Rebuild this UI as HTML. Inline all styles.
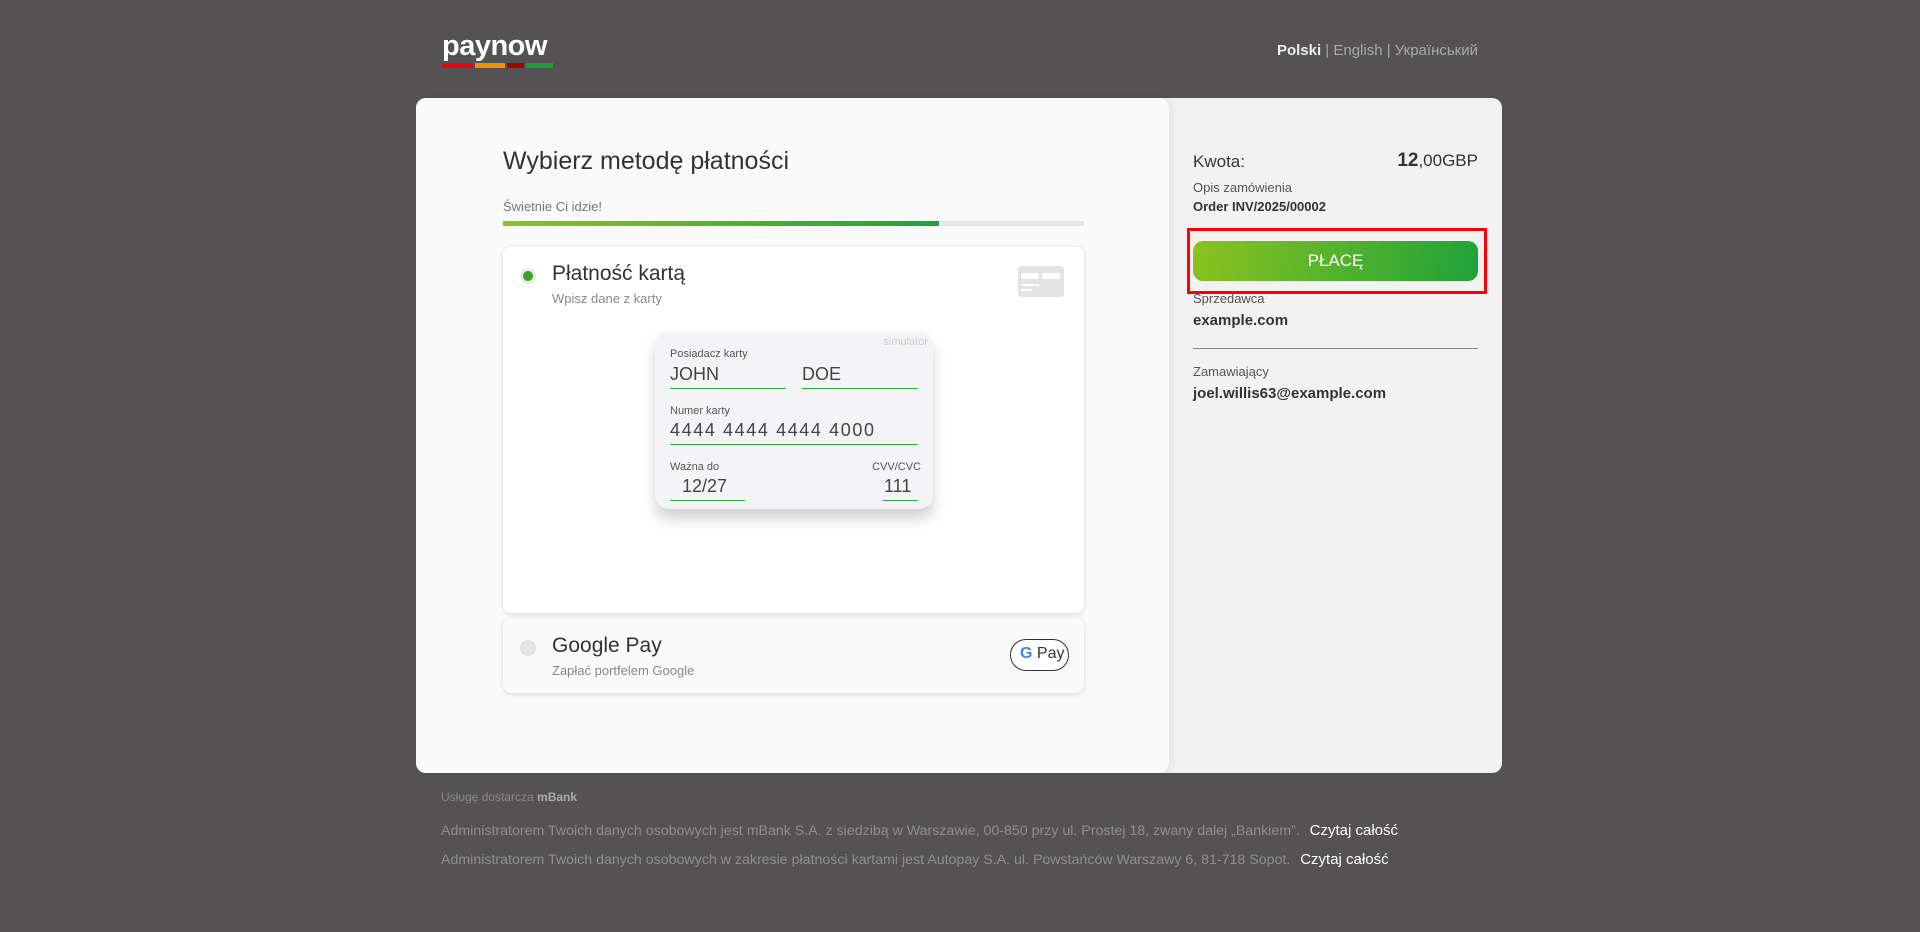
<!DOCTYPE html>
<html><head><meta charset="utf-8"><style>
*{margin:0;padding:0;box-sizing:border-box}
body{width:1920px;height:932px;background:#545253;font-family:"Liberation Sans",sans-serif;position:relative;overflow:hidden;color:#333}
.a{position:absolute;white-space:nowrap}
</style></head><body>
<div class="a" style="left:442px;top:30px;font-size:29px;font-weight:bold;color:#fff;letter-spacing:-0.5px">paynow</div>
<div class="a" style="left:442px;top:63px;width:31px;height:5px;background:#e30613"></div>
<div class="a" style="left:475px;top:63px;width:30px;height:5px;background:#f39200"></div>
<div class="a" style="left:507px;top:63px;width:17px;height:5px;background:#a00"></div>
<div class="a" style="left:526px;top:63px;width:27px;height:5px;background:#1e9e3a"></div>
<div class="a" style="right:442px;top:42px;font-size:15px;color:#aaa"><b style="color:#eee;font-weight:bold">Polski</b> | English | Український</div>

<div class="a" style="left:416px;top:98px;width:1086px;height:675px;background:#f2f2f2;border-radius:10px"></div>
<div class="a" style="left:416px;top:98px;width:753px;height:675px;background:#fafafa;border-radius:10px;box-shadow:4px 0 8px rgba(0,0,0,.06)"></div>

<div class="a" style="left:503px;top:147px;font-size:25px;color:#333">Wybierz metodę płatności</div>
<div class="a" style="left:503px;top:199px;font-size:13px;color:#777">Świetnie Ci idzie!</div>
<div class="a" style="left:503px;top:221px;width:581px;height:5px;background:#e6e6e6"></div>
<div class="a" style="left:503px;top:221px;width:436px;height:5px;background:linear-gradient(90deg,#8cc220,#1ea23a)"></div>

<div class="a" style="left:503px;top:247px;width:581px;height:366px;background:#fff;border-radius:8px;box-shadow:0 1px 5px rgba(0,0,0,.15)"></div>
<div class="a" style="left:520px;top:268px;width:16px;height:16px;border-radius:50%;background:#e8e8e8"></div>
<div class="a" style="left:523px;top:271px;width:10px;height:10px;border-radius:50%;background:#3aa324"></div>
<div class="a" style="left:552px;top:262px;font-size:21px;color:#333">Płatność kartą</div>
<div class="a" style="left:552px;top:291px;font-size:13px;color:#888">Wpisz dane z karty</div>
<div class="a" style="left:1018px;top:266px;width:46px;height:31px;background:#e3e3e3;border-radius:3px">
<div class="a" style="left:3px;top:7px;width:18px;height:6px;background:#fff;border-radius:2px"></div>
<div class="a" style="left:24px;top:7px;width:18px;height:6px;background:#fff;border-radius:2px"></div>
<div class="a" style="left:3px;top:18px;width:18px;height:2px;background:#fff"></div>
<div class="a" style="left:3px;top:23px;width:11px;height:2px;background:#fff"></div>
</div>

<div class="a" style="left:655px;top:331px;width:278px;height:178px;background:#f4f4f6;border-radius:14px;box-shadow:0 10px 14px rgba(0,0,0,.18)">
<div class="a" style="right:5px;top:5px;font-size:11px;color:#ccc">simulator</div>
<div class="a" style="left:15px;top:17px;font-size:11px;color:#555">Posiadacz karty</div>
<div class="a" style="left:15px;top:33px;font-size:18px;color:#444">JOHN</div>
<div class="a" style="left:15px;top:57px;width:116px;height:1px;background:#2aa33a"></div>
<div class="a" style="left:147px;top:33px;font-size:18px;color:#444">DOE</div>
<div class="a" style="left:147px;top:57px;width:116px;height:1px;background:#2aa33a"></div>
<div class="a" style="left:15px;top:74px;font-size:11px;color:#555">Numer karty</div>
<div class="a" style="left:15px;top:89px;font-size:18px;color:#444;letter-spacing:1.6px">4444 4444 4444 4000</div>
<div class="a" style="left:15px;top:113px;width:248px;height:1px;background:#2aa33a"></div>
<div class="a" style="left:15px;top:130px;font-size:11px;color:#555">Ważna do</div>
<div class="a" style="right:12px;top:130px;font-size:11px;color:#555">CVV/CVC</div>
<div class="a" style="left:27px;top:145px;font-size:18px;color:#444">12/27</div>
<div class="a" style="left:15px;top:169px;width:75px;height:1px;background:#2aa33a"></div>
<div class="a" style="left:229px;top:145px;font-size:18px;color:#444">111</div>
<div class="a" style="left:228px;top:169px;width:35px;height:1px;background:#2aa33a"></div>
</div>

<div class="a" style="left:503px;top:618px;width:581px;height:75px;background:#fafafa;border-radius:8px;box-shadow:0 1px 5px rgba(0,0,0,.15)"></div>
<div class="a" style="left:520px;top:640px;width:16px;height:16px;border-radius:50%;background:#e4e4e4"></div>
<div class="a" style="left:552px;top:634px;font-size:21px;color:#333">Google Pay</div>
<div class="a" style="left:552px;top:663px;font-size:13px;color:#888">Zapłać portfelem Google</div>
<div class="a" style="left:1010px;top:639px;width:59px;height:32px;border:1.5px solid #333;border-radius:16px;background:#fff;font-size:16px;color:#333;padding:5px 0 0 9px"><b style="color:#4285f4">G</b> Pay</div>

<div class="a" style="left:1193px;top:152px;font-size:17px;color:#333">Kwota:</div>
<div class="a" style="right:442px;top:150px;font-size:17px;color:#333"><b style="font-size:19px">12</b>,00GBP</div>
<div class="a" style="left:1193px;top:180px;font-size:13px;color:#555">Opis zamówienia</div>
<div class="a" style="left:1193px;top:199px;font-size:13px;font-weight:bold;color:#333">Order INV/2025/00002</div>
<div class="a" style="left:1187px;top:228px;width:300px;height:66px;border:3px solid #f00"></div>
<div class="a" style="left:1193px;top:241px;width:285px;height:40px;border-radius:10px;background:linear-gradient(100deg,#8cc220,#1ea23a);color:#fff;font-size:17px;text-align:center;line-height:40px">PŁACĘ</div>
<div class="a" style="left:1193px;top:291px;font-size:13px;color:#555">Sprzedawca</div>
<div class="a" style="left:1193px;top:312px;font-size:15px;font-weight:bold;color:#333">example.com</div>
<div class="a" style="left:1193px;top:348px;width:285px;height:1px;background:#888"></div>
<div class="a" style="left:1193px;top:364px;font-size:13px;color:#555">Zamawiający</div>
<div class="a" style="left:1193px;top:385px;font-size:15px;font-weight:bold;color:#333">joel.willis63@example.com</div>

<div class="a" style="left:441px;top:790px;font-size:12px;color:#8a8a8a">Usługę dostarcza <b style="color:#aaa">mBank</b></div>
<div class="a" style="left:441px;top:822px;font-size:14.2px;color:#8f8f8f">Administratorem Twoich danych osobowych jest mBank S.A. z siedzibą w Warszawie, 00-850 przy ul. Prostej 18, zwany dalej „Bankiem”. <span style="color:#fff;font-size:15px;margin-left:6px">Czytaj całość</span></div>
<div class="a" style="left:441px;top:851px;font-size:14.2px;color:#8f8f8f">Administratorem Twoich danych osobowych w zakresie płatności kartami jest Autopay S.A. ul. Powstańców Warszawy 6, 81-718 Sopot. <span style="color:#fff;font-size:15px;margin-left:6px">Czytaj całość</span></div>
</body></html>
